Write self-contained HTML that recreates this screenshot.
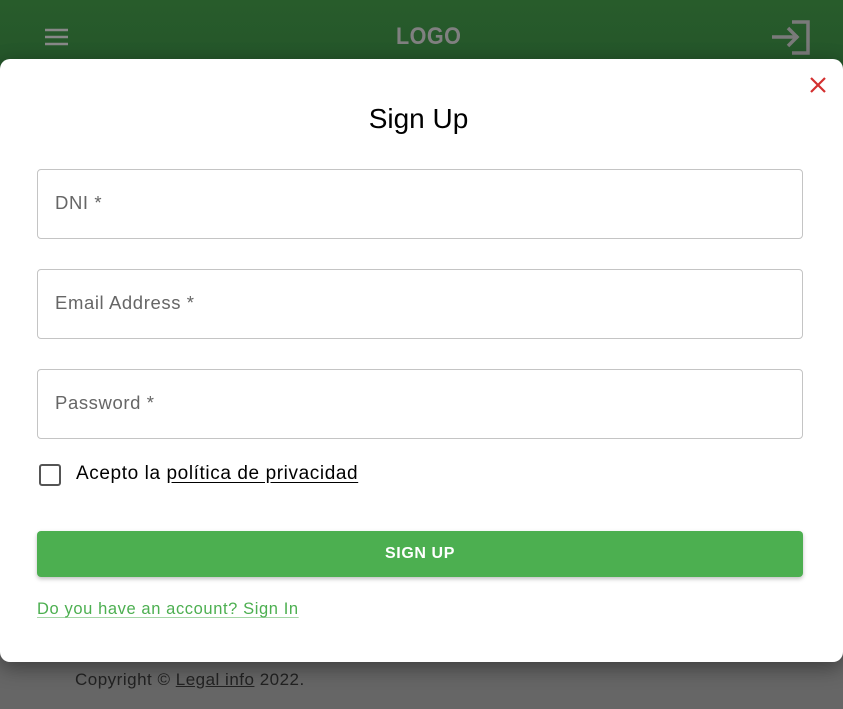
<!DOCTYPE html>
<html><head><style>
*{box-sizing:border-box;margin:0;padding:0}
body{width:843px;height:709px;overflow:hidden;background:#666;font-family:"Liberation Sans",sans-serif;position:relative}
.hdr{position:absolute;top:0;left:0;width:843px;height:70px;background:linear-gradient(#285c2b,#24552a)}
.logo{position:absolute;left:396px;top:23px;color:#808080;font-size:24px;transform:scaleX(.9);transform-origin:left;font-weight:bold;letter-spacing:.5px}
.modal{position:absolute;left:0;top:59px;width:843px;height:603px;background:#fff;border-radius:10px;box-shadow:0 6px 20px rgba(0,0,0,.4)}
h2{position:absolute;top:44px;left:-3px;width:100%;text-align:center;font-weight:400;font-size:28px;color:#000}
.inp{position:absolute;left:37px;width:766px;height:70px;border:1px solid #c4c4c4;border-radius:4px;padding-left:17px;line-height:66px;font-size:18.5px;letter-spacing:.6px;color:#666}
.cb{position:absolute;left:39px;top:405px;width:22px;height:22px;border:2px solid #555;border-radius:3px}
.lbl{position:absolute;left:76px;top:404px;font-size:19px;letter-spacing:.6px;color:#000}
.lbl u{text-underline-offset:3px}
.btn{position:absolute;left:37px;top:472px;width:766px;height:46px;background:#4caf50;border-radius:4px;color:#fff;text-align:center;line-height:46px;font-size:16px;font-weight:bold;letter-spacing:.6px;box-shadow:0 2px 4px rgba(0,0,0,.25)}
.lnk{position:absolute;left:37px;top:541px;font-size:16.5px;letter-spacing:.6px;color:#4caf50;text-decoration:underline;text-decoration-color:#a5d6a7;text-underline-offset:3px}
.copy{position:absolute;left:75px;top:670px;font-size:17px;letter-spacing:.5px;color:#222}
</style></head><body>
<div class="hdr">
<svg style="position:absolute;left:44px;top:27px" width="26" height="20"><g stroke="#888" stroke-width="2.5"><line x1="1" y1="3" x2="24" y2="3"/><line x1="1" y1="10" x2="24" y2="10"/><line x1="1" y1="17" x2="24" y2="17"/></g></svg>
<div class="logo">LOGO</div>
<svg style="position:absolute;left:770px;top:20px" width="42" height="36" viewBox="0 0 42 36"><g stroke="#7a7a7a" stroke-width="3.5" fill="none"><polyline points="22,2 38,2 38,33 22,33"/><line x1="2" y1="17" x2="28" y2="17"/><polyline points="18,8 27,17 18,26"/></g></svg>
</div>
<div class="copy">Copyright © <u>Legal info</u> 2022.</div>
<div class="modal">
<svg style="position:absolute;left:809px;top:17px" width="18" height="18"><g stroke="#d32f2f" stroke-width="2.2"><line x1="2" y1="2" x2="16" y2="16"/><line x1="16" y1="2" x2="2" y2="16"/></g></svg>
<h2>Sign Up</h2>
<div class="inp" style="top:110px">DNI *</div>
<div class="inp" style="top:210px">Email Address *</div>
<div class="inp" style="top:310px">Password *</div>
<div class="cb"></div>
<div class="lbl">Acepto la <u>política de privacidad</u></div>
<div class="btn">SIGN UP</div>
<div class="lnk">Do you have an account? Sign In</div>
</div>
</body></html>
